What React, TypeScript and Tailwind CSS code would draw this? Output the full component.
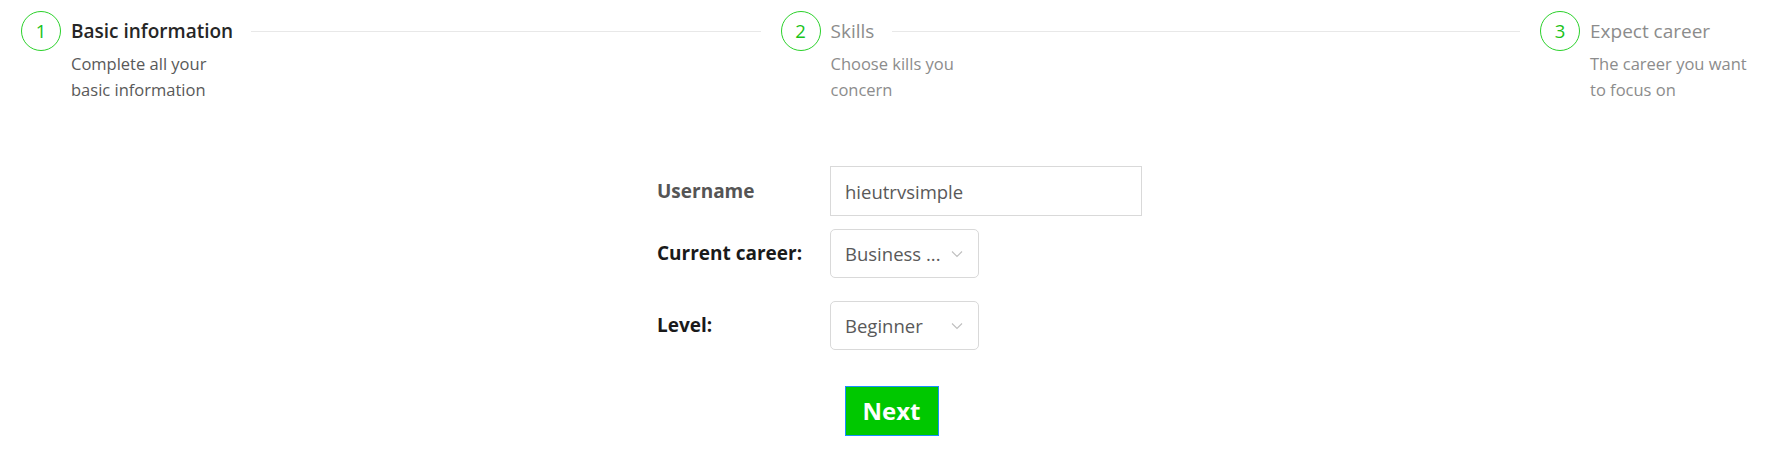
const font = { fontFamily: '"Open Sans", "Noto Sans", sans-serif' };

type StepProps = {
  n: number;
  title: string;
  desc: string[];
  active?: boolean;
  last?: boolean;
};

function Step({ n, title, desc, active, last }: StepProps) {
  return (
    <div className={`flex items-start ${last ? 'flex-none' : 'flex-1 min-w-0'}`}>
      <div className="w-[40px] h-[40px] shrink-0 rounded-full border-[1.25px] border-[#2bd12b] flex items-center justify-center text-[18.5px] text-[#19c219]">
        {n}
      </div>
      <div className={`ml-[10px] ${last ? 'w-[175px]' : 'flex-1 min-w-0'}`}>
        <div className="flex items-center h-[40px]">
          <span
            className={`whitespace-nowrap text-[19px] ${
              active ? 'text-[#262626] font-semibold' : 'text-[#8c8c8c]'
            }`}
          >
            {title}
          </span>
          {!last && <div className="flex-1 h-px bg-[#e8e8e8] ml-[18px] mr-[20px]" />}
        </div>
        <div
          className={`max-w-[175px] text-[16.5px] leading-[26px] ${
            active ? 'text-[#595959]' : 'text-[#8c8c8c]'
          }`}
        >
          {desc.map((d) => (
            <div key={d}>{d}</div>
          ))}
        </div>
      </div>
    </div>
  );
}

function Select({ value }: { value: string }) {
  return (
    <div className="w-[149px] h-[49px] border border-[#d9d9d9] rounded-[5px] bg-white flex items-center pl-[14px] pr-[15px]">
      <span className="flex-1 text-[18.5px] text-[#595959] whitespace-nowrap">{value}</span>
      <svg width="12" height="8" viewBox="0 0 12 8" fill="none" className="mt-[1px]">
        <polyline points="1,1.5 6,6.5 11,1.5" stroke="#bfbfbf" strokeWidth="1.1" />
      </svg>
    </div>
  );
}

export default function App() {
  return (
    <div className="w-[1789px] h-[463px] bg-white" style={font}>
      {/* Steps */}
      <div className="flex pl-[21px] pr-[24px] pt-[11px]">
        <Step n={1} title="Basic information" desc={['Complete all your', 'basic information']} active />
        <Step n={2} title="Skills" desc={['Choose kills you', 'concern']} />
        <Step n={3} title="Expect career" desc={['The career you want', 'to focus on']} last />
      </div>

      {/* Form */}
      <div className="w-[495px] mx-auto pl-[10px] mt-[63px]">
        <div className="flex items-center h-[50px]">
          <label className="w-[173px] text-[19px] font-bold text-[#555555]">Username</label>
          <input
            defaultValue="hieutrvsimple"
            className="w-[312px] h-[50px] border border-[#d9d9d9] px-[14px] text-[18.5px] text-[#595959] outline-none"
            style={font}
          />
        </div>
        <div className="flex items-center mt-[13px]">
          <label className="w-[173px] text-[19px] font-bold text-[#1a1a1a]">Current career:</label>
          <Select value="Business ..." />
        </div>
        <div className="flex items-center mt-[23px]">
          <label className="w-[173px] text-[19px] font-bold text-[#1a1a1a]">Level:</label>
          <Select value="Beginner" />
        </div>
      </div>

      <div className="flex justify-center pr-[6px] mt-[36px]">
        <button className="w-[94px] h-[50px] bg-[#00c800] border border-[#1890ff] text-white text-[24px] font-bold">
          Next
        </button>
      </div>
    </div>
  );
}
